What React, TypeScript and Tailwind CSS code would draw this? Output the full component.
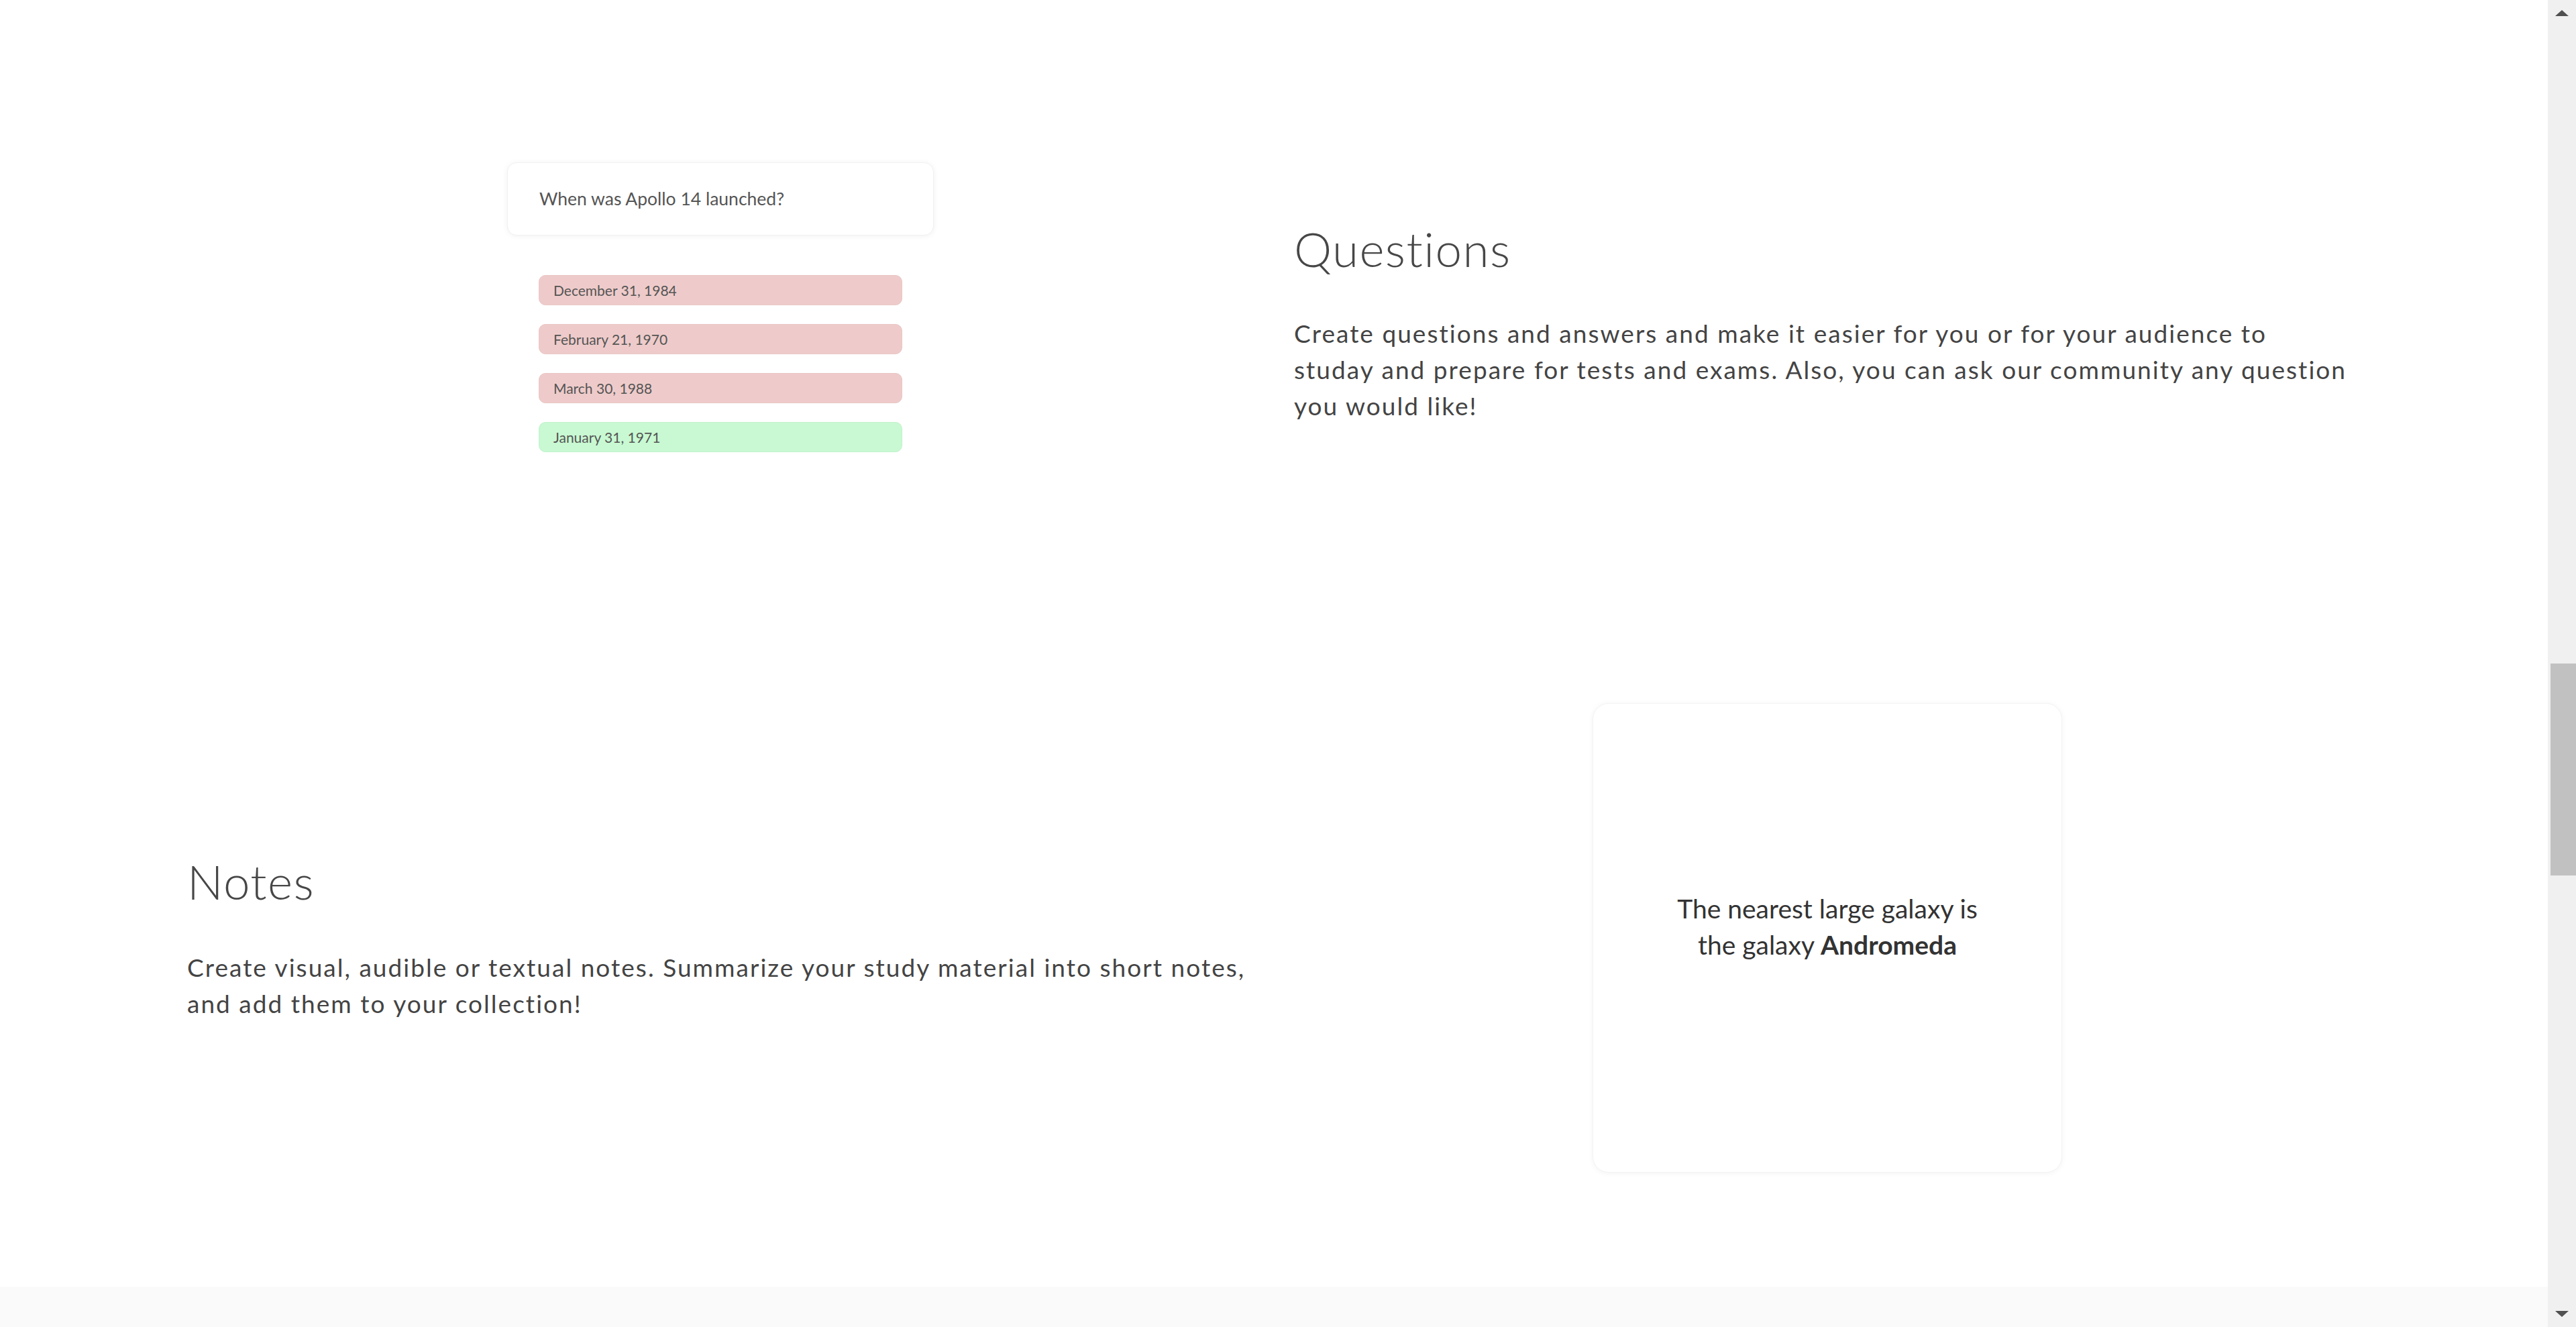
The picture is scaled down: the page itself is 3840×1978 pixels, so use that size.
import React from "react"

const answers = [
    { label: "December 31, 1984", correct: false },
    { label: "February 21, 1970", correct: false },
    { label: "March 30, 1988", correct: false },
    { label: "January 31, 1971", correct: true },
]

const QuestionPreview = () => {
    return (
        <div className="flex flex-col items-center">
            <div className="w-[636px] h-[109px] flex items-center pl-[47px] bg-white rounded-[14px] border border-[#f1f1f1] shadow-[0_1px_8px_rgba(0,0,0,0.06)]">
                <p className="text-[26.5px] text-[#555555]">When was Apollo 14 launched?</p>
            </div>
            <div className="w-[542px] mt-[59px] flex flex-col gap-[28px]">
                {answers.map((a) => (
                    <div
                        key={a.label}
                        className={
                            a.correct
                                ? "h-[45px] flex items-center pl-[21px] rounded-[10px] bg-[#c8f9d2] border border-[#c2f2cc]"
                                : "h-[45px] flex items-center pl-[21px] rounded-[10px] bg-[#eecbca] border border-[#e9c6c5]"
                        }
                    >
                        <span className="text-[21px] text-[#555555]">{a.label}</span>
                    </div>
                ))}
            </div>
        </div>
    )
}

const NoteCard = () => {
    return (
        <div className="flex justify-center">
            <div className="w-[700px] h-[700px] flex items-center justify-center pb-[34px] bg-white rounded-[24px] border border-[#f3f3f3] shadow-[0_1px_8px_rgba(0,0,0,0.05)]">
                <p className="w-[500px] text-center text-[39px] leading-[54px] text-[#333333]">
                    The nearest large galaxy is the galaxy <span className="font-bold">Andromeda</span>
                </p>
            </div>
        </div>
    )
}

const Scrollbar = () => {
    return (
        <div className="w-[42px] h-full flex flex-col items-center bg-[#f0f0f0]">
            <div className="mt-[15px] w-0 h-0 border-l-[10px] border-r-[10px] border-b-[9px] border-l-transparent border-r-transparent border-b-[#505050]" />
            <div className="mt-[965px] ml-[3px] w-[38px] h-[316px] bg-[#c1c1c1]" />
            <div className="mt-auto mb-[15px] w-0 h-0 border-l-[10px] border-r-[10px] border-t-[9px] border-l-transparent border-r-transparent border-t-[#505050]" />
        </div>
    )
}

export default function App() {
    return (
        <div className="flex h-screen w-full overflow-hidden bg-white font-['Lato',sans-serif]">
            <main className="flex-1 flex flex-col">
                <div className="w-[3240px] mx-auto pt-[242px] flex flex-col gap-[374px]">
                    <section className="grid grid-cols-2 gap-x-[60px] items-start">
                        <QuestionPreview />
                        <div className="pt-[88px]">
                            <h2 className="text-[71px] leading-[82px] font-light tracking-[0.02em] text-[#474747]">Questions</h2>
                            <p className="mt-[58px] text-[37px] leading-[54px] tracking-[0.055em] text-[#444444]">
                                Create questions and answers and make it easier for you or for your audience to
                                <br />
                                studay and prepare for tests and exams. Also, you can ask our community any question you would like!
                            </p>
                        </div>
                    </section>
                    <section className="grid grid-cols-2 gap-x-[60px] items-center">
                        <div>
                            <h2 className="text-[71px] leading-[82px] font-light tracking-[0.02em] text-[#474747]">Notes</h2>
                            <p className="mt-[60px] text-[37px] leading-[54px] tracking-[0.055em] text-[#444444]">
                                Create visual, audible or textual notes. Summarize your study material into short notes, and add them to your collection!
                            </p>
                        </div>
                        <NoteCard />
                    </section>
                </div>
                <div className="mt-auto h-[60px] bg-[#fafafa]" />
            </main>
            <Scrollbar />
        </div>
    )
}
